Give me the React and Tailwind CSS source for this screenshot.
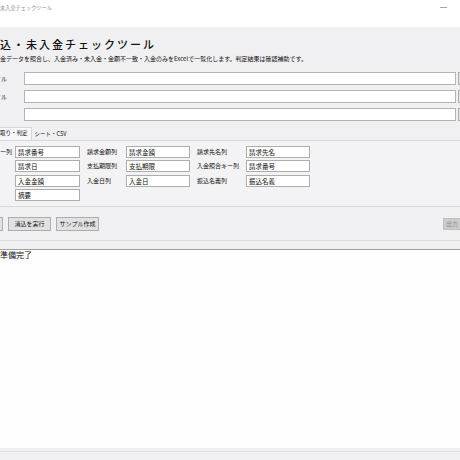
export default function App() {
  const font = { fontFamily: '"Noto Sans CJK JP", "Noto Sans", sans-serif' };
  const Field = ({ value, w }) => (
    <div className={`h-[12px] ${w} shrink-0 bg-white border border-[#adadad] flex items-center pl-[2px] text-[6.5px] leading-none text-[#111] overflow-hidden whitespace-nowrap`}>
      {value}
    </div>
  );
  const Lbl = ({ children, w }) => (
    <div className={`h-[12px] ${w} shrink-0 flex items-center pl-[7px] text-[6px] leading-none text-[#111] whitespace-nowrap`}>
      {children}
    </div>
  );
  const rows = [
    ["請求キー列", "請求番号", "請求金額列", "請求金額", "請求先名列", "請求先名"],
    ["", "請求日", "支払期限列", "支払期限", "入金照合キー列", "請求番号"],
    ["", "入金金額", "入金日列", "入金日", "振込名義列", "振込名義"],
    ["", "摘要", null, null, null, null],
  ];
  return (
    <div className="w-[460px] h-[460px] overflow-hidden flex flex-col bg-[#f0eff2] text-black" style={font}>
      {/* title bar */}
      <div className="h-[27px] shrink-0 bg-white flex items-start justify-between">
        <span className="mt-[4px] text-[5.2px] leading-[8px] text-[#8f8f8f] whitespace-nowrap">未入金チェックツール</span>
        <span className="mt-[7px] mr-[13px] w-[7px] h-px bg-[#a8a8a8]" />
      </div>

      {/* header */}
      <div className="shrink-0 flex flex-col">
        <div className="mt-[10px] h-[14px] flex items-center text-[11px] font-medium tracking-[2px] leading-none text-[#111] whitespace-nowrap">
          込・未入金チェックツール
        </div>
        <div className="mt-[4px] h-[8px] flex items-center text-[6px] leading-none text-[#111] whitespace-nowrap">
          金データを照合し、入金済み・未入金・金額不一致・入金のみをExcelで一覧化します。判定結果は確認補助です。
        </div>
      </div>

      {/* file rows */}
      <div className="mt-[9px] shrink-0 flex flex-col gap-[5px]">
        {["請求データファイル", "入金データファイル", ""].map((l, i) => (
          <div key={i} className="h-[13px] flex items-center">
            <div className="w-[24px] shrink-0 flex justify-end pr-[17px] text-[6px] leading-none text-[#111] whitespace-nowrap">
              {l}
            </div>
            <div className="h-[13px] w-[432px] shrink-0 bg-white border border-[#b4b4b4]" />
            <div className="ml-[2px] h-[13px] w-[30px] shrink-0 bg-[#e1e1e1] border border-[#adadad]" />
          </div>
        ))}
      </div>

      {/* tabs */}
      <div className="mt-[6px] h-[13px] shrink-0 flex items-end">
        <div className="-ml-[10px] h-[13px] pl-[10px] pr-[3px] flex items-center bg-[#f7f6f8] border-t border-r border-[#d6d6d6] text-[5.5px] leading-none text-[#111] whitespace-nowrap">
          取り・判定
        </div>
        <div className="ml-[3px] h-[11px] flex items-center text-[5.5px] leading-none text-[#111] whitespace-nowrap">
          シート・CSV
        </div>
      </div>

      {/* tab panel */}
      <div className="shrink-0 border-t border-b border-[#d8d8d8] bg-[#f3f2f4] pt-[5px] pb-[5px] flex flex-col gap-[2.4px]">
        {rows.map((r, i) => (
          <div key={i} className="h-[12px] flex items-center">
            <div className="w-[15px] shrink-0 flex justify-end pr-[3px] text-[6px] leading-none text-[#111] whitespace-nowrap">
              {r[0]}
            </div>
            <Field value={r[1]} w="w-[65px]" />
            {r[2] !== null && (
              <>
                <Lbl w="w-[46px]">{r[2]}</Lbl>
                <Field value={r[3]} w="w-[64px]" />
                <Lbl w="w-[56px]">{r[4]}</Lbl>
                <Field value={r[5]} w="w-[64px]" />
              </>
            )}
          </div>
        ))}
      </div>

      {/* buttons */}
      <div className="mt-[10px] h-[14px] shrink-0 flex items-center">
        <div className="-ml-[40px] h-[14px] w-[43px] shrink-0 bg-[#e1e1e1] border border-[#adadad]" />
        <div className="ml-[5px] h-[14px] w-[43px] shrink-0 bg-[#e1e1e1] border border-[#adadad] flex items-center justify-center text-[6px] leading-none text-[#111] whitespace-nowrap">
          消込を実行
        </div>
        <div className="ml-[5px] h-[14px] w-[43px] shrink-0 bg-[#e1e1e1] border border-[#adadad] flex items-center justify-center text-[6px] leading-none text-[#111] whitespace-nowrap">
          サンプル作成
        </div>
        <div className="ml-auto -mr-[30px] h-[12px] w-[47px] shrink-0 bg-[#cccccc] border border-[#bfbfbf] flex items-center pl-[2px] text-[6px] leading-none text-[#8a8a8a] whitespace-nowrap">
          出力
        </div>
      </div>

      <div className="mt-[9px] h-px shrink-0 bg-[#dcdcdc]" />

      {/* log area */}
      <div className="mt-[8px] flex-1 bg-[#fefefe] border-t border-[#a0a0a0] flex flex-col">
        <div className="h-[10px] flex items-center text-[8px] leading-none text-[#111] whitespace-nowrap">準備完了</div>
      </div>

      {/* status bar */}
      <div className="h-[12px] shrink-0 bg-[#f0eff2] flex flex-col">
        <div className="mt-[3px] h-px bg-[#e2e0e4]" />
      </div>
    </div>
  );
}
